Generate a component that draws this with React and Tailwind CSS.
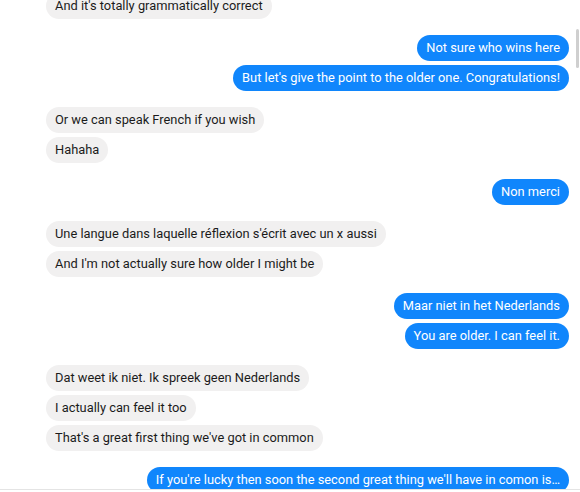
import React from 'react';

// Conversation, grouped by sender
const groups = [
  { me: false, lines: ["And it's totally grammatically correct"] },
  { me: true, lines: ['Not sure who wins here', "But let's give the point to the older one. Congratulations!"] },
  { me: false, lines: ['Or we can speak French if you wish', 'Hahaha'] },
  { me: true, lines: ['Non merci'] },
  { me: false, lines: ["Une langue dans laquelle réflexion s'écrit avec un x aussi", "And I'm not actually sure how older I might be"] },
  { me: true, lines: ['Maar niet in het Nederlands', 'You are older. I can feel it.'] },
  { me: false, lines: ['Dat weet ik niet. Ik spreek geen Nederlands', 'I actually can feel it too', "That's a great first thing we've got in common"] },
  { me: true, lines: ["If you're lucky then soon the second great thing we'll have in comon is…"] },
];

const Bubble = ({ me, text }) => (
  <div
    className={`rounded-full px-[9px] py-[5px] text-[12.85px] leading-4 whitespace-nowrap ${
      me ? 'bg-[#1086fc] text-white' : 'bg-[#f1f0f0] text-[#1b1b1b]'
    }`}
  >
    {text}
  </div>
);

const App = () => {
  return (
    <div className="relative flex h-[492px] w-[580px] flex-col overflow-hidden bg-white font-['Roboto',sans-serif]">
      <div className="flex-1 overflow-hidden">
        <div className="mt-[-7px] flex flex-col gap-4 pl-[46px] pr-[11px]">
          {groups.map((g, i) => (
            <div key={i} className={`flex flex-col gap-1 ${g.me ? 'items-end' : 'items-start'}`}>
              {g.lines.map((t, j) => (
                <Bubble key={j} me={g.me} text={t} />
              ))}
            </div>
          ))}
        </div>
      </div>
      <div className="h-[3px] shrink-0 border-t border-[#e4e4e4] bg-white" />

      {/* scroll thumb */}
      <div className="absolute right-[1px] top-[29px] h-[39px] w-[3px] rounded-full bg-[#cfcfcf]" />
    </div>
  );
};

export default App;
